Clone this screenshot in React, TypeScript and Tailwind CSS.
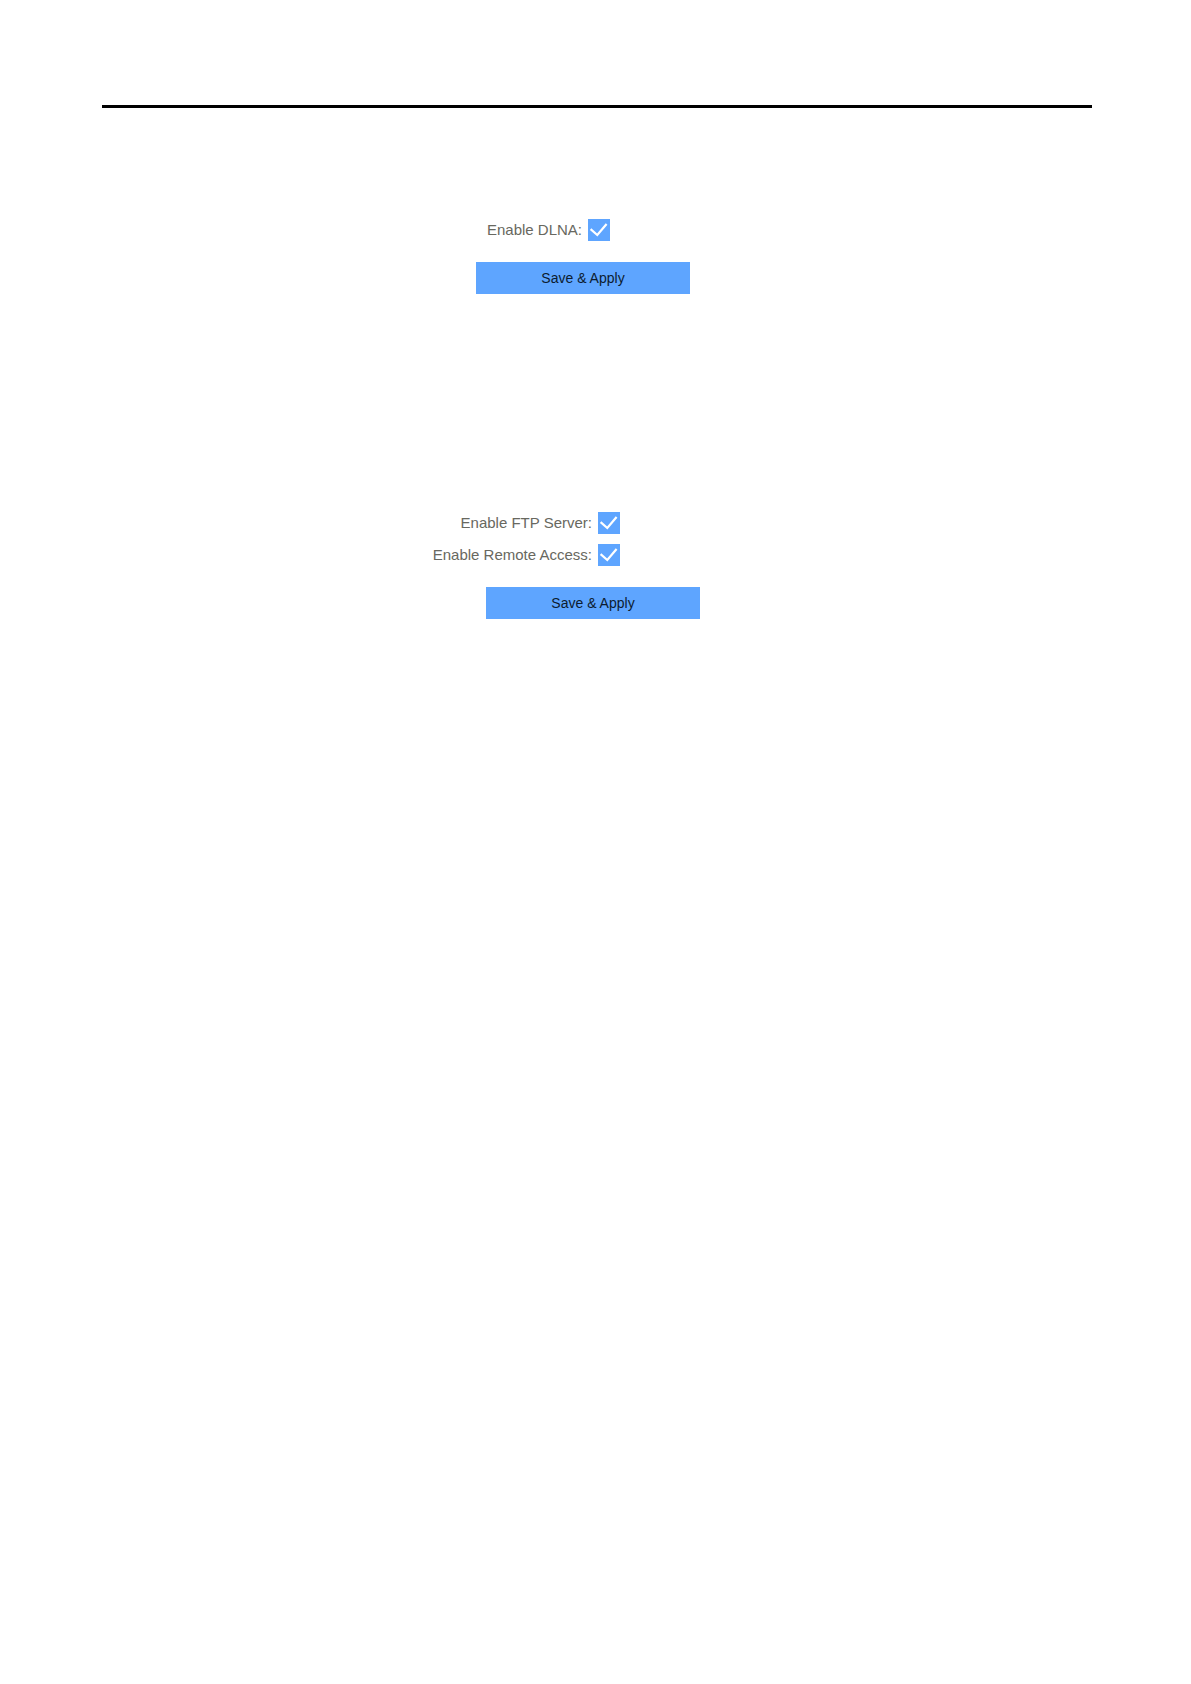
import { useId, useState } from "react";
import type { FormEvent, ReactNode } from "react";

function CheckRow({ label }: { label: string }) {
  const id = useId();
  const [checked, setChecked] = useState(true);

  return (
    <div className="grid grid-cols-2 items-center gap-1.5">
      <label htmlFor={id} className="text-right text-[15px] leading-5 text-[#686860]">
        {label}
      </label>
      <span className="grid size-[22px]">
        <input
          id={id}
          type="checkbox"
          checked={checked}
          onChange={(e) => setChecked(e.target.checked)}
          className="peer col-start-1 row-start-1 size-[22px] appearance-none border border-[#5ea5ff] bg-white checked:bg-[#5ea5ff]"
        />
        <svg
          viewBox="0 0 22 22"
          aria-hidden="true"
          className="pointer-events-none invisible col-start-1 row-start-1 size-[22px] peer-checked:visible"
        >
          <path d="M2.6 10.2 L9.3 16 L18.6 5" fill="none" stroke="#fff" strokeWidth="2.2" />
        </svg>
      </span>
    </div>
  );
}

function SettingsForm({ className, children }: { className?: string; children: ReactNode }) {
  const handleSubmit = (e: FormEvent) => e.preventDefault();

  return (
    <form onSubmit={handleSubmit} className={className}>
      <div className="space-y-[10px]">{children}</div>
      <div className="mt-[21px] flex justify-center pr-1">
        <button type="submit" className="h-8 w-[214px] bg-[#5ea5ff] text-sm text-[#0c1c30]">
          Save &amp; Apply
        </button>
      </div>
    </form>
  );
}

export default function App() {
  return (
    <main className="min-h-screen bg-white pt-[105px] pr-[99px] pl-[102px] font-['Liberation_Sans',Arial,sans-serif]">
      <hr className="border-t-3 border-black" />
      <SettingsForm className="mt-[111px] pr-6">
        <CheckRow label="Enable DLNA:" />
      </SettingsForm>
      <SettingsForm className="mt-[218px] pr-1">
        <CheckRow label="Enable FTP Server:" />
        <CheckRow label="Enable Remote Access:" />
      </SettingsForm>
    </main>
  );
}
